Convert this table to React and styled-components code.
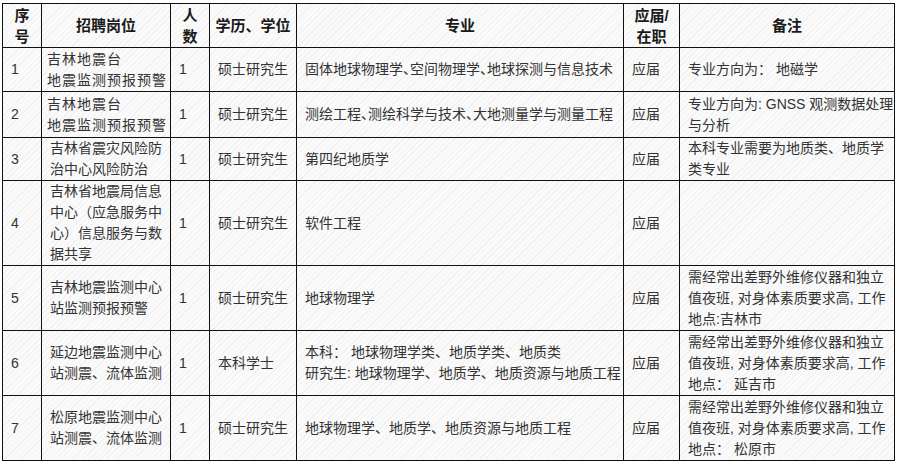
import React from 'react'
import styled, { createGlobalStyle } from 'styled-components'

const GlobalStyle = createGlobalStyle`
  html, body {
    margin: 0;
    padding: 0;
    background: #ffffff;
  }
  body {
    padding: 3px 0 0 2px;
    font-family: "Liberation Sans", "Noto Sans CJK SC", sans-serif;
  }
`

const Table = styled.table`
  border-collapse: collapse;
  table-layout: fixed;
  width: 893px;
  background-color: #fafafa;
  background-image: repeating-linear-gradient(
    135deg,
    #fbfbfb 0px,
    #fbfbfb 3px,
    #efefef 3px,
    #efefef 4px
  );
  color: #333;
  font-size: 14px;
  line-height: 21px;
`

const Row = styled.tr`
  height: ${p => p.h}px;
`

const HeadCell = styled.th`
  border: 1px solid #111;
  padding: 0 4px;
  font-weight: bold;
  font-size: 15px;
  color: #1a1a1a;
  text-align: center;
  vertical-align: middle;
`

const Cell = styled.td`
  border: 1px solid #111;
  padding: 0 2px 0 8px;
  vertical-align: middle;
  text-align: left;
`

const Line = styled.span`
  display: block;
  white-space: nowrap;
  letter-spacing: ${p => (p.spaced ? '1px' : '0')};
  margin-left: ${p => (p.spaced ? '-3px' : '0')};
`

const Dun = styled.span`
  letter-spacing: -7px;
`

const widths = [39, 129, 39, 87, 327, 56, 215]

const lines = arr => arr.map((l, i) => <Line key={i}>{l}</Line>)

const station = [
  <Line key="a" spaced>吉林地震台</Line>,
  <Line key="b" spaced>地震监测预报预警</Line>
]

const rows = [
  {
    h: 44,
    no: '1',
    post: station,
    degree: '硕士研究生',
    major: [<Line key="m">固体地球物理学<Dun>、</Dun>空间物理学<Dun>、</Dun>地球探测与信息技术</Line>],
    note: lines(['专业方向为：  地磁学'])
  },
  {
    h: 46,
    no: '2',
    post: station,
    degree: '硕士研究生',
    major: [<Line key="m">测绘工程<Dun>、</Dun>测绘科学与技术<Dun>、</Dun>大地测量学与测量工程</Line>],
    note: lines(['专业方向为: GNSS 观测数据处理', '与分析'])
  },
  {
    h: 42,
    no: '3',
    post: lines(['吉林省震灾风险防', '治中心风险防治']),
    degree: '硕士研究生',
    major: lines(['第四纪地质学']),
    note: lines(['本科专业需要为地质类、地质学', '类专业'])
  },
  {
    h: 85,
    no: '4',
    post: lines(['吉林省地震局信息', '中心（应急服务中', '心）信息服务与数', '据共享']),
    degree: '硕士研究生',
    major: lines(['软件工程']),
    note: null
  },
  {
    h: 65,
    no: '5',
    post: lines(['吉林地震监测中心', '站监测预报预警']),
    degree: '硕士研究生',
    major: lines(['地球物理学']),
    note: lines(['需经常出差野外维修仪器和独立', '值夜班, 对身体素质要求高, 工作', '地点:吉林市'])
  },
  {
    h: 65,
    no: '6',
    post: lines(['延边地震监测中心', '站测震、流体监测']),
    degree: '本科学士',
    major: lines(['本科：  地球物理学类、地质学类、地质类', '研究生: 地球物理学、地质学、地质资源与地质工程']),
    note: lines(['需经常出差野外维修仪器和独立', '值夜班, 对身体素质要求高, 工作', '地点：  延吉市'])
  },
  {
    h: 65,
    no: '7',
    post: lines(['松原地震监测中心', '站测震、流体监测']),
    degree: '硕士研究生',
    major: lines(['地球物理学、地质学、地质资源与地质工程']),
    note: lines(['需经常出差野外维修仪器和独立', '值夜班, 对身体素质要求高, 工作', '地点：  松原市'])
  }
]

export default function App () {
  return <>
    <GlobalStyle />
    <Table>
      <colgroup>
        {widths.map((w, i) => <col key={i} style={{ width: w }} />)}
      </colgroup>
      <thead>
        <Row h={44}>
          <HeadCell>{lines(['序', '号'])}</HeadCell>
          <HeadCell>招聘岗位</HeadCell>
          <HeadCell>{lines(['人', '数'])}</HeadCell>
          <HeadCell>学历、学位</HeadCell>
          <HeadCell>专业</HeadCell>
          <HeadCell>{lines(['应届/', '在职'])}</HeadCell>
          <HeadCell>备注</HeadCell>
        </Row>
      </thead>
      <tbody>
        {rows.map(r => (
          <Row key={r.no} h={r.h}>
            <Cell>{r.no}</Cell>
            <Cell>{r.post}</Cell>
            <Cell>1</Cell>
            <Cell>{r.degree}</Cell>
            <Cell>{r.major}</Cell>
            <Cell>应届</Cell>
            <Cell>{r.note}</Cell>
          </Row>
        ))}
      </tbody>
    </Table>
  </>
}
